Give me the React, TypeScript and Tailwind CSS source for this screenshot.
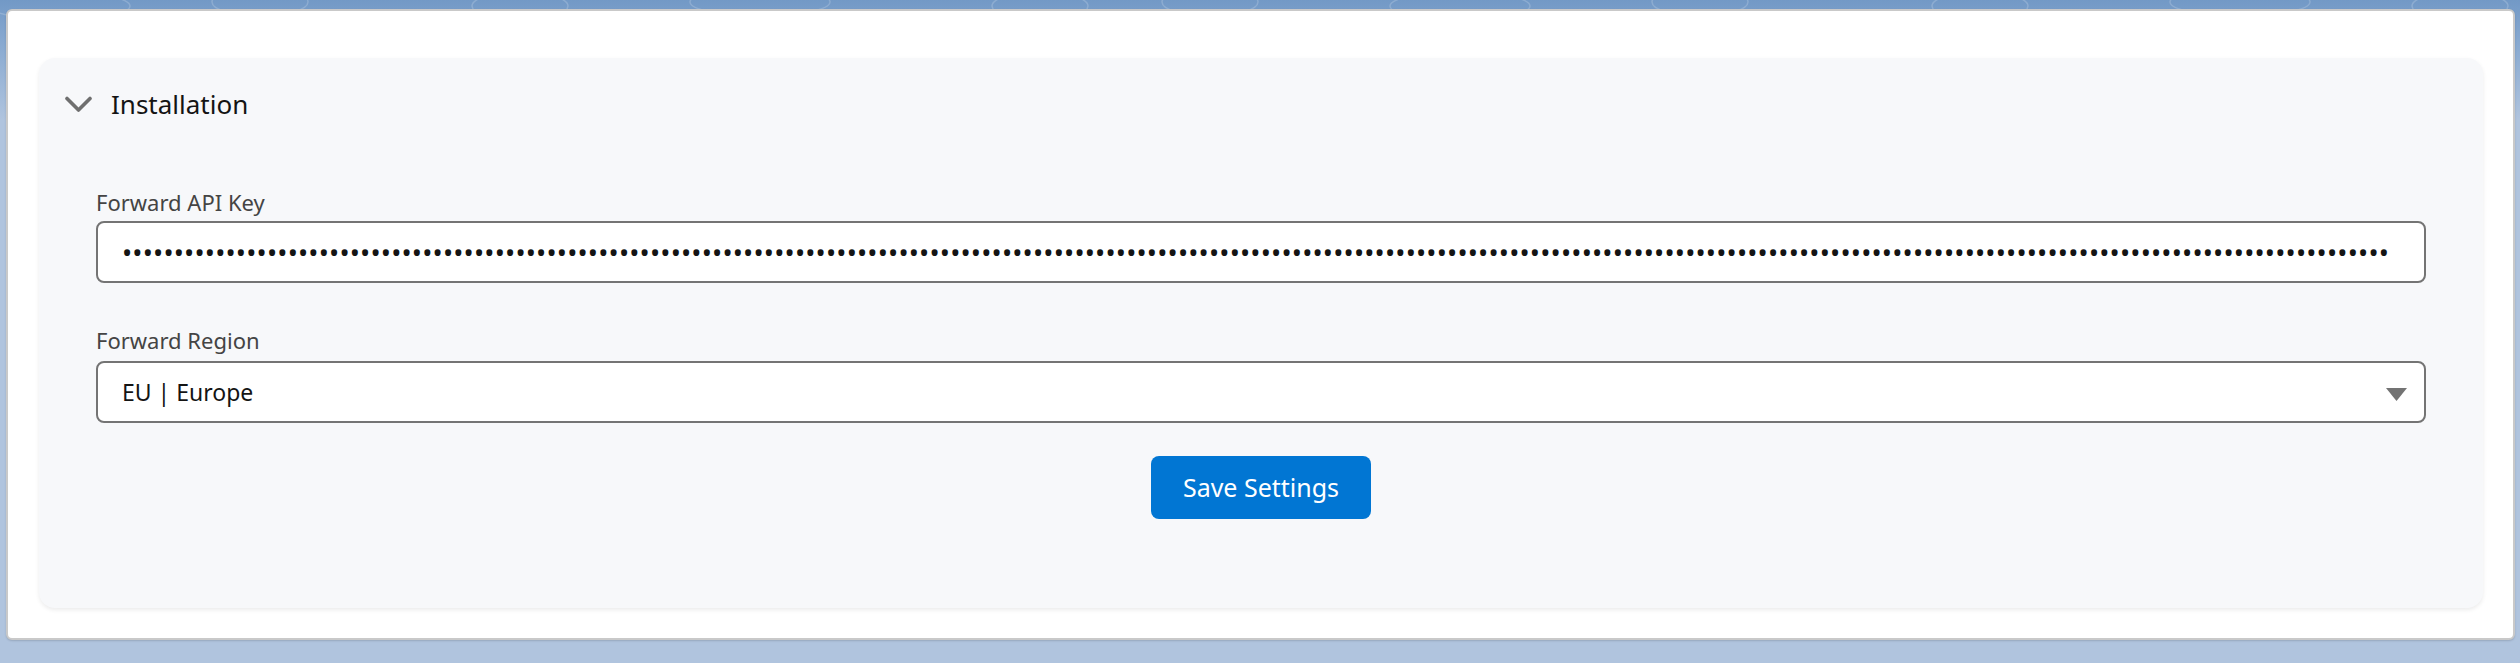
import { useState } from "react";

const FONT = "font-['Noto_Sans',_'Open_Sans',_sans-serif]";

function Chevron() {
  return (
    <svg width="27" height="17" viewBox="0 0 27 17" fill="none" className="shrink-0">
      <path d="M2 2.5 L13.5 14 L25 2.5" stroke="#6f6f6f" strokeWidth="3.6" strokeLinecap="round" strokeLinejoin="round" />
    </svg>
  );
}

function Swirls() {
  // faint background pattern in the top band
  return (
    <svg className="absolute inset-x-0 top-0 h-[40px] w-full" viewBox="0 0 2520 40" preserveAspectRatio="none" fill="none">
      {[60, 260, 520, 760, 1040, 1210, 1460, 1700, 1980, 2240, 2460].map((x, i) => (
        <ellipse key={i} cx={x} cy={i % 2 ? 2 : 6} rx={i % 3 ? 48 : 70} ry={14} stroke="#ffffff" strokeOpacity="0.18" strokeWidth="1.5" />
      ))}
    </svg>
  );
}

export default function App() {
  const [region, setRegion] = useState("eu");
  const apiKey = "x".repeat(219);

  return (
    <div className={`relative min-h-[663px] bg-[linear-gradient(180deg,#7299c6_0px,#86a8d0_40px,#b0c4de_120px,#b0c4de_100%)] px-[6px] pt-[9px] ${FONT}`}>
      <Swirls />
      <div className="relative w-[2509px] h-[631px] rounded-[6px] border-2 border-[#c9c9c9] bg-white pt-[47px] pl-[31px] shadow-[0_1px_2px_rgba(0,0,0,0.15)]">
        <div className="w-[2444px] h-[550px] rounded-2xl bg-[#f7f8fa] pt-[26px] shadow-[0_2px_4px_rgba(0,0,0,0.08)]">
          {/* section header */}
          <div className="flex h-[40px] items-center gap-[19px] pl-[26px]">
            <Chevron />
            <span className="text-[26px] leading-[40px] text-[#141414]">Installation</span>
          </div>

          <div className="mt-[64px] px-[57px]">
            <label className="block text-[22px] leading-[28px] text-[#444444]">Forward API Key</label>
            <input
              type="password"
              readOnly
              value={apiKey}
              className="mt-[5px] block h-[62px] w-full rounded-[8px] border-2 border-[#747474] bg-white pl-[24px] pr-[30px] text-[27px] tracking-[0.2px] text-[#141414] outline-none"
            />

            <label className="mt-[43px] block text-[22px] leading-[28px] text-[#444444]">Forward Region</label>
            <div className="relative mt-[7px]">
              <select
                value={region}
                onChange={(e) => setRegion(e.target.value)}
                className="block h-[62px] w-full appearance-none rounded-[8px] border-2 border-[#747474] bg-white pl-[24px] text-[23px] text-[#141414] outline-none"
              >
                <option value="eu">EU | Europe</option>
                <option value="us">US | United States</option>
              </select>
              <svg width="21" height="14" viewBox="0 0 21 14" className="pointer-events-none absolute right-[19px] top-[27px]">
                <path d="M0 0 H21 L10.5 13 Z" fill="#737373" />
              </svg>
            </div>

            <div className="mt-[33px] flex justify-center">
              <button className="h-[63px] w-[220px] rounded-[8px] bg-[#0176d3] text-[25px] text-white">
                Save Settings
              </button>
            </div>
          </div>
        </div>
      </div>
    </div>
  );
}
